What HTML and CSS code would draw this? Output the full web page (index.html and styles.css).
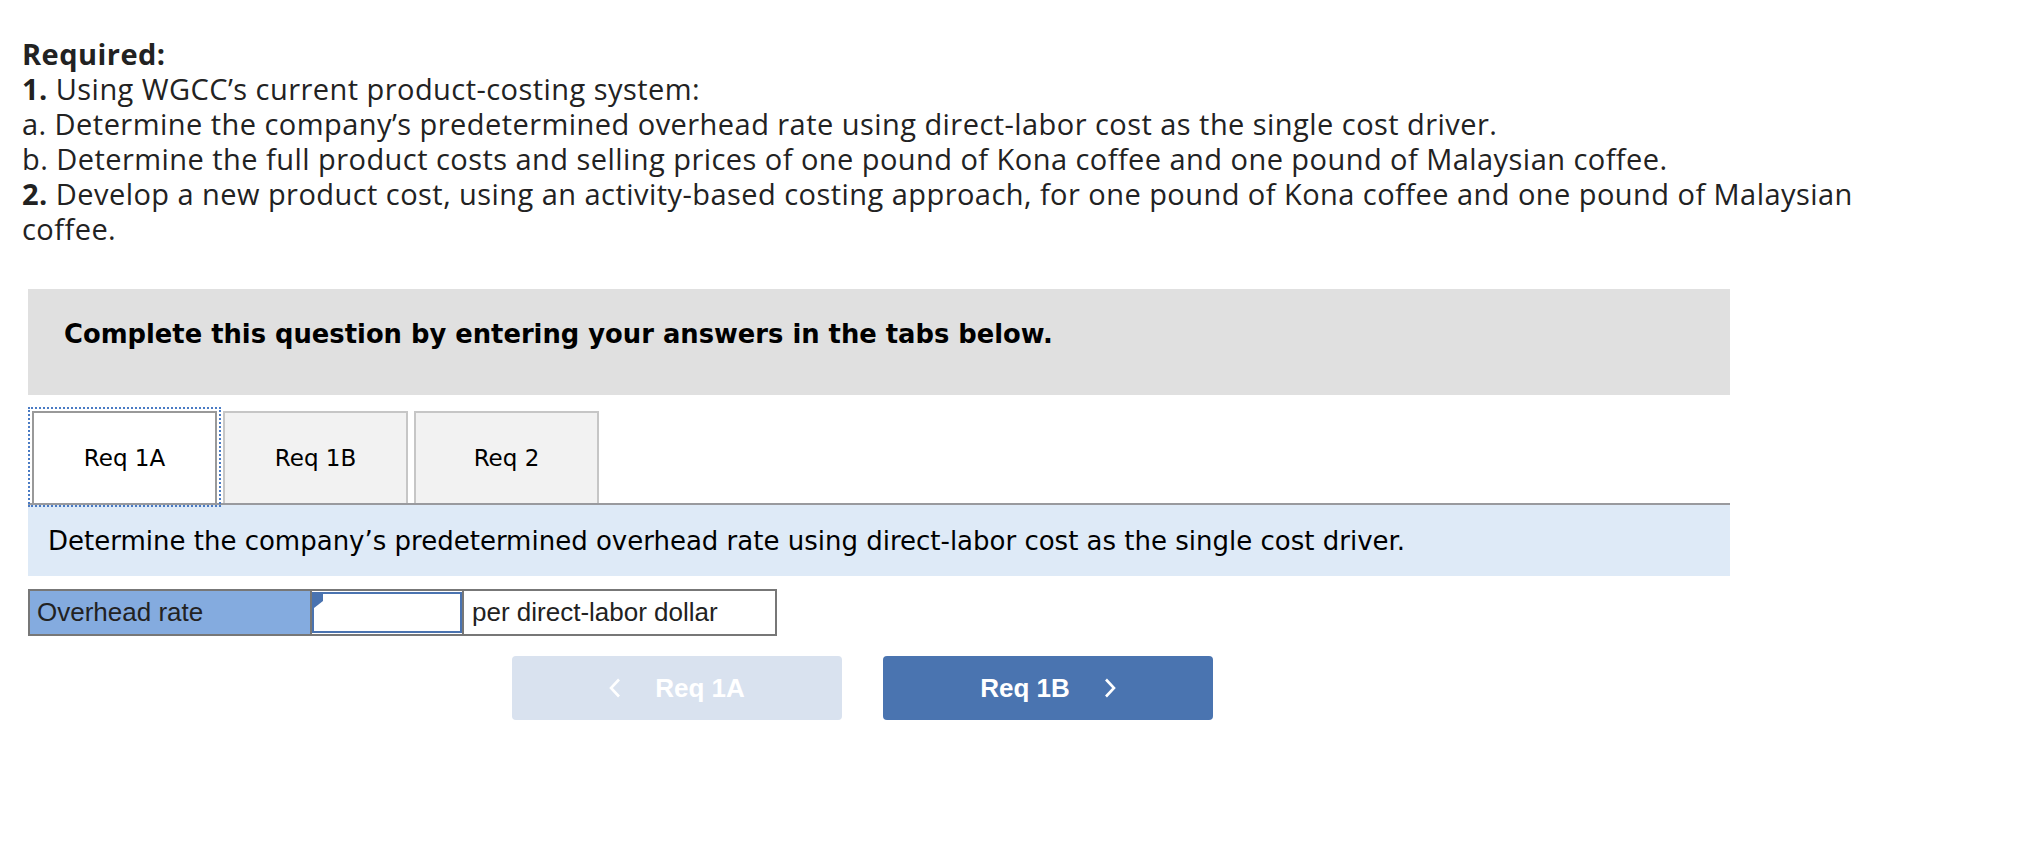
FILE: index.html
```html
<!DOCTYPE html>
<html>
<head>
<meta charset="utf-8">
<link rel="stylesheet" href="styles.css">
</head>
<body>
<div class="required">
  <p><b>Required:</b></p>
  <p><b>1.</b> Using WGCC’s current product-costing system:</p>
  <p>a. Determine the company’s predetermined overhead rate using direct-labor cost as the single cost driver.</p>
  <p>b. Determine the full product costs and selling prices of one pound of Kona coffee and one pound of Malaysian coffee.</p>
  <p><b>2.</b> Develop a new product cost, using an activity-based costing approach, for one pound of Kona coffee and one pound of Malaysian coffee.</p>
</div>

<div class="widget">
  <div class="banner">Complete this question by entering your answers in the tabs below.</div>

  <div class="tabs">
    <div class="tab active">Req 1A</div>
    <div class="tab">Req 1B</div>
    <div class="tab">Req 2</div>
  </div>

  <div class="desc">Determine the company’s predetermined overhead rate using direct-labor cost as the single cost driver.</div>

  <div class="answer-row">
    <div class="cell label">Overhead rate</div>
    <div class="cell input"><span class="flag"></span></div>
    <div class="cell units">per direct-labor dollar</div>
  </div>

  <div class="nav">
    <div class="btn prev">
      <svg class="chev" width="12" height="20" viewBox="0 0 12 20"><polyline points="10,1.5 2,10 10,18.5" fill="none" stroke="#ffffff" stroke-width="2.6"/></svg>
      <span>Req 1A</span>
    </div>
    <div class="btn next">
      <span>Req 1B</span>
      <svg class="chev" width="12" height="20" viewBox="0 0 12 20"><polyline points="2,1.5 10,10 2,18.5" fill="none" stroke="#ffffff" stroke-width="2.6"/></svg>
    </div>
  </div>
</div>
</body>
</html>
```

FILE: styles.css
```css
html, body {
  margin: 0;
  padding: 0;
  background: #ffffff;
}

.required {
  padding: 36px 0 0 22px;
  font-family: "Open Sans", Lato, sans-serif;
  font-size: 29px;
  letter-spacing: 0.45px;
  line-height: 35px;
  color: #222222;
  width: 1890px;
}

.required p {
  margin: 0;
}

.required b {
  font-weight: 700;
}

.widget {
  margin: 43px 0 0 28px;
  width: 1702px;
}

.banner {
  height: 106px;
  box-sizing: border-box;
  background: #e0e0e0;
  padding: 30px 0 0 36px;
  font-family: "DejaVu Sans", Verdana, sans-serif;
  font-weight: bold;
  font-size: 25.8px;
  line-height: 30px;
  color: #000000;
}

.tabs {
  margin-top: 16px;
  display: flex;
  gap: 6px;
  border-bottom: 2px solid #999a9e;
  padding-left: 4px;
  height: 94px;
  box-sizing: border-box;
}

.tab {
  width: 185px;
  height: 92px;
  box-sizing: border-box;
  border: 2px solid #c6c6c6;
  border-bottom: none;
  background: #f2f2f2;
  display: flex;
  align-items: center;
  justify-content: center;
  font-family: "DejaVu Sans", Verdana, sans-serif;
  font-size: 23px;
  color: #000000;
}

.tab.active {
  background: #ffffff;
  border-color: #999999;
  outline: 2px dotted #4a7bc4;
  outline-offset: 2px;
}

.desc {
  height: 71px;
  background: #deeaf7;
  padding-left: 20px;
  display: flex;
  align-items: center;
  font-family: "DejaVu Sans", Verdana, sans-serif;
  font-size: 26px;
  color: #000000;
}

.answer-row {
  margin-top: 13px;
  display: flex;
  width: 749px;
  height: 47px;
  box-sizing: border-box;
  border: 2px solid #777777;
  font-family: "Liberation Sans", Arial, sans-serif;
  font-size: 26px;
  color: #222222;
}

.cell {
  box-sizing: border-box;
  display: flex;
  align-items: center;
}

.label {
  width: 282px;
  background: #84abdf;
  padding-left: 7px;
  border-right: 2px solid #777777;
}

.input {
  width: 150px;
  position: relative;
  background: #ffffff;
  border: 2px solid #4a73b0;
  margin: 1px 0;
}

.flag {
  position: absolute;
  left: 0;
  top: 0;
  width: 0;
  height: 0;
  border-top: 7px solid transparent;
  border-bottom: 7px solid transparent;
  border-left: 9px solid #4a73b0;
  border-top-color: #4a73b0;
}

.units {
  flex: 1;
  padding-left: 8px;
  border-left: 2px solid #777777;
  background: #ffffff;
}

.nav {
  margin: 20px 0 0 484px;
  display: flex;
  gap: 41px;
}

.btn {
  width: 330px;
  height: 64px;
  border-radius: 4px;
  display: flex;
  align-items: center;
  justify-content: center;
  gap: 34px;
  font-family: "Liberation Sans", Arial, sans-serif;
  font-weight: bold;
  font-size: 26px;
  color: #ffffff;
}

.btn.prev {
  background: #d9e2ef;
}

.btn.next {
  background: #4a74b0;
}

.chev {
  display: block;
}
```
